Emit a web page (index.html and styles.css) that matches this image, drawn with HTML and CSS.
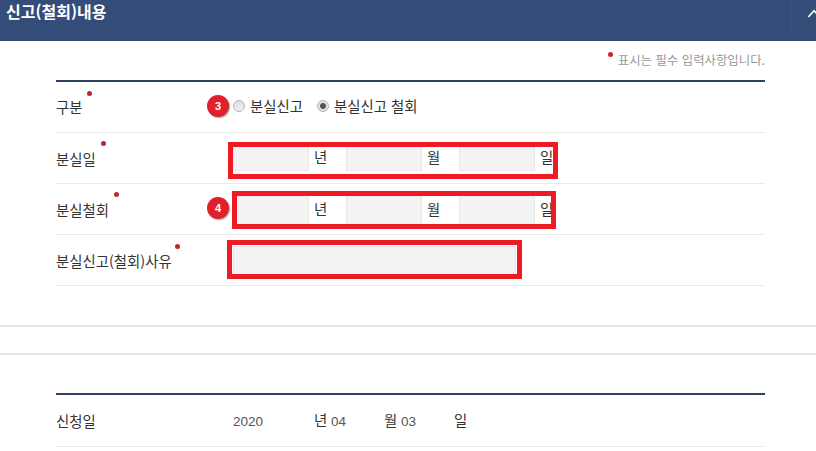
FILE: index.html
```html
<!DOCTYPE html>
<html lang="ko">
  <head>
    <meta charset="UTF-8" />
    <title>신고(철회)내용</title>
    <link rel="stylesheet" href="styles.css">
  </head>
  <body>
    <header class="panel-head">
      <h2 class="panel-head__title">신고(철회)내용</h2>
      <button class="panel-head__toggle" aria-label="접기">
        <svg width="26" height="32" viewBox="0 0 26 32"><path d="M18 17 L24 10.5 L30 17" fill="none" stroke="#fff" stroke-width="1.6"/></svg>
      </button>
    </header>

    <main class="content">
      <p class="note"><span class="req req--note"></span>표시는 필수 입력사항입니다.</p>

      <div class="table">
        <div class="row">
          <div class="row__label row__label--first">구분<span class="req req--a"></span></div>
          <div class="row__value">
            <span class="badge">3</span>
            <label class="radio"><span class="radio__dot"></span>분실신고</label>
            <label class="radio"><span class="radio__dot radio__dot--on"></span>분실신고 철회</label>
          </div>
        </div>
        <div class="row">
          <div class="row__label">분실일<span class="req req--b"></span></div>
          <div class="row__value">
            <div class="date">
              <span class="field"></span><span class="unit">년</span>
              <span class="field"></span><span class="unit">월</span>
              <span class="field"></span><span class="unit">일</span>
            </div>
            <span class="frame frame--date1"></span>
          </div>
        </div>
        <div class="row">
          <div class="row__label">분실철회<span class="req req--c"></span></div>
          <div class="row__value">
            <span class="badge">4</span>
            <div class="date date--tall">
              <span class="field"></span><span class="unit">년</span>
              <span class="field"></span><span class="unit">월</span>
              <span class="field"></span><span class="unit">일</span>
            </div>
            <span class="frame frame--date2"></span>
          </div>
        </div>
        <div class="row">
          <div class="row__label">분실신고(철회)사유<span class="req req--d"></span></div>
          <div class="row__value">
            <span class="field field--wide"></span>
            <span class="frame frame--reason"></span>
          </div>
        </div>
      </div>

      <div class="band"></div>

      <div class="table table--applied">
        <div class="row row--applied">
          <div class="row__label">신청일</div>
          <div class="row__value applied">
            <span class="applied__num applied__num--year">2020</span><span class="unit unit--plain">년</span>
            <span class="applied__num">04</span><span class="unit unit--plain">월</span>
            <span class="applied__num">03</span><span class="unit unit--plain">일</span>
          </div>
        </div>
      </div>
    </main>
  </body>
</html>
```

FILE: styles.css
```css
* {
  margin: 0;
  padding: 0;
  box-sizing: border-box;
}

body {
  font-family: "Noto Sans CJK KR", "Noto Sans", sans-serif;
  font-size: 14.4px;
  color: #333;
  background-color: #fff;
  overflow: hidden;
}

.panel-head {
  height: 41px;
  background-color: #344c78;
  display: flex;
  justify-content: space-between;
  color: #fff;
}

.panel-head__title {
  font-size: 16px;
  font-weight: 700;
  line-height: 23px;
  padding-left: 6px;
}

.panel-head__toggle {
  width: 26px;
  height: 32px;
  border: none;
  border-left: 1px solid #405782;
  background: none;
  display: flex;
  overflow: hidden;
}

.content {
  padding: 0 51px 0 56px;
}

.note {
  height: 39px;
  padding-top: 10px;
  text-align: right;
  font-size: 12.4px;
  line-height: 18px;
  color: #999;
  position: relative;
}

.req {
  position: absolute;
  width: 5px;
  height: 5px;
  border-radius: 50%;
  background-color: #c0272d;
}

.req--note { left: 552px; top: 11px; }
.req--a { left: 31px; top: 9px; }
.req--b { left: 45px; top: 8px; }
.req--c { left: 58px; top: 8px; }
.req--d { left: 119px; top: 9px; }

.table {
  border-top: 2px solid #2f4263;
}

.row {
  height: 51px;
  display: flex;
  border-bottom: 1px solid #eaeaea;
}

.row__label {
  width: 177px;
  position: relative;
  padding-top: 1px;
  line-height: 50px;
  color: #333;
}

.row__label--first {
  padding-top: 0;
}

.row__value {
  flex: 1;
  position: relative;
  display: flex;
  align-items: center;
}

.radio {
  display: flex;
  align-items: center;
  margin-right: 14px;
  padding-bottom: 3px;
}

.radio__dot {
  width: 12px;
  height: 12px;
  margin-right: 5px;
  border-radius: 50%;
  border: 1px solid #b5b5b5;
  background: linear-gradient(#dedede, #f2f2f2);
}

.radio__dot--on {
  background: radial-gradient(circle, #555 0 2.5px, #e2e2e2 3.5px);
}

.date {
  display: flex;
  margin-bottom: 1px;
}

.date--tall {
  margin: 3px 0 0;
}

.field {
  display: block;
  width: 76px;
  height: 27px;
  background-color: #f3f3f3;
  border: 1px solid #e8e8e8;
}

.date--tall .field {
  height: 29px;
}

.unit {
  width: 37px;
  padding-left: 5px;
  line-height: 26px;
}

.field--wide {
  width: 283px;
  height: 29px;
}

.badge {
  position: absolute;
  left: -26px;
  top: 13px;
  width: 22px;
  height: 22px;
  border-radius: 50%;
  background-color: #e0202a;
  box-shadow: 1px 1px 1px #b3a5a5;
  color: #fff;
  font: 700 11px/22px "Liberation Sans", sans-serif;
  text-align: center;
}

.frame {
  position: absolute;
  border: 5px solid #ed1c24;
}

.frame--date1 { left: -5px; top: 9px; width: 330px; height: 37px; }
.frame--date2 { left: -1px; top: 7px; width: 324px; height: 38px; }
.frame--reason { left: -6px; top: 5px; width: 295px; height: 39px; }

.band {
  height: 30px;
  margin: 39px -51px 0 -56px;
  border-top: 2px solid #e6e6e6;
  border-bottom: 2px solid #e6e6e6;
}

.table--applied {
  margin-top: 38px;
}

.row--applied {
  height: 52px;
}

.applied {
  align-items: flex-start;
  padding-top: 12px;
}

.applied__num {
  width: 53px;
  font: 13.5px/30px "Liberation Sans", sans-serif;
  color: #555;
}

.applied__num--year {
  width: 81px;
}

.unit--plain {
  width: 17px;
  padding-left: 0;
}
```
